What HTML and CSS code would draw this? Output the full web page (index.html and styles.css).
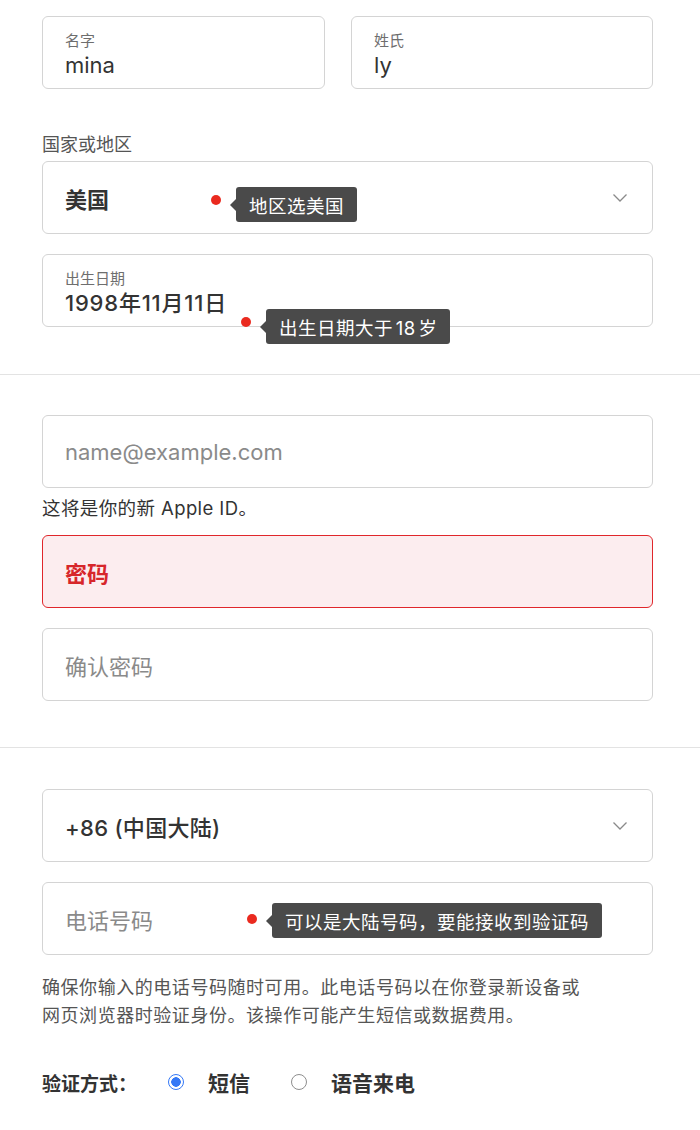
FILE: index.html
```html
<!DOCTYPE html>
<html lang="zh-CN">
<head>
<meta charset="utf-8">
<title>创建 Apple ID</title>
<link rel="stylesheet" href="styles.css">
</head>
<body>
<main class="form">
  <section class="section section-first">
    <div class="name-row">
      <div class="field field-labeled">
        <span class="field-label">名字</span>
        <span class="field-value">mina</span>
      </div>
      <div class="field field-labeled">
        <span class="field-label">姓氏</span>
        <span class="field-value">ly</span>
      </div>
    </div>

    <div class="group-label">国家或地区</div>
    <div class="field field-select">
      <span class="select-value">美国</span>
      <svg class="chevron" viewBox="0 0 16 10" aria-hidden="true"><path d="M1.5 1.5 L8 8 L14.5 1.5"/></svg>
      <span class="dot dot-country"></span>
      <span class="tip tip-country">地区选美国</span>
    </div>

    <div class="field field-labeled field-dob">
      <span class="field-label">出生日期</span>
      <span class="field-value dob-value">1998年11月11日</span>
      <span class="dot dot-dob"></span>
      <span class="tip tip-dob">出生日期大于 18 岁</span>
    </div>
  </section>

  <section class="section section-account">
    <div class="field field-plain">
      <span class="placeholder">name@example.com</span>
    </div>
    <p class="helper">这将是你的新 Apple ID。</p>
    <div class="field field-plain field-error">
      <span class="error-text">密码</span>
    </div>
    <div class="field field-plain field-gap">
      <span class="placeholder">确认密码</span>
    </div>
  </section>

  <section class="section section-phone">
    <div class="field field-select">
      <span class="select-value phone-code">+86 (中国大陆)</span>
      <svg class="chevron" viewBox="0 0 16 10" aria-hidden="true"><path d="M1.5 1.5 L8 8 L14.5 1.5"/></svg>
    </div>
    <div class="field field-plain field-gap">
      <span class="placeholder">电话号码</span>
      <span class="dot dot-phone"></span>
      <span class="tip tip-phone">可以是大陆号码，要能接收到验证码</span>
    </div>
    <p class="notice">确保你输入的电话号码随时可用。此电话号码以在你登录新设备或<br>网页浏览器时验证身份。该操作可能产生短信或数据费用。</p>
    <div class="verify-row">
      <span class="verify-label">验证方式：</span>
      <span class="radio radio-on"></span>
      <span class="radio-text">短信</span>
      <span class="radio radio-off"></span>
      <span class="radio-text">语音来电</span>
    </div>
  </section>
</main>
</body>
</html>
```

FILE: styles.css
```css
* { box-sizing: border-box; }

html, body {
  margin: 0;
  padding: 0;
  background: #ffffff;
}

body {
  width: 700px;
  height: 1130px;
  overflow: hidden;
  font-family: "Inter", "Noto Sans CJK SC", sans-serif;
  color: #333333;
}

.form {
  display: flex;
  flex-direction: column;
}

.section {
  padding: 0 47px 0 42px;
  display: flex;
  flex-direction: column;
}

.section-first {
  padding-top: 16px;
  padding-bottom: 47px;
  border-bottom: 1px solid #e3e3e3;
}

.section-account {
  padding-top: 40px;
  padding-bottom: 46px;
  border-bottom: 1px solid #e3e3e3;
}

.section-phone {
  padding-top: 41px;
}

.name-row {
  display: grid;
  grid-template-columns: 283px 1fr;
  gap: 26px;
}

.field {
  position: relative;
  height: 73px;
  border: 1px solid #d4d4d4;
  border-radius: 6px;
  background: #ffffff;
  padding: 0 24px 0 22px;
}

.field-labeled {
  display: flex;
  flex-direction: column;
  padding-top: 14px;
}

.field-label {
  font-size: 15px;
  line-height: 20px;
  color: #6e6e6e;
}

.field-value {
  font-size: 22px;
  line-height: 28px;
  color: #333333;
}

.dob-value {
  font-weight: 500;
  letter-spacing: 0.8px;
}

.field-dob {
  margin-top: 20px;
}

.group-label {
  margin-top: 44px;
  margin-bottom: 4px;
  font-size: 18px;
  line-height: 24px;
  color: #555555;
}

.field-select {
  display: flex;
  align-items: center;
  justify-content: space-between;
}

.select-value {
  font-size: 22px;
  font-weight: 600;
  color: #333333;
}

.phone-code {
  font-weight: 500;
  letter-spacing: 0.3px;
}

.chevron {
  width: 16px;
  height: 10px;
  fill: none;
  stroke: #8a8a8a;
  stroke-width: 1.3;
}

.field-plain {
  display: flex;
  align-items: center;
}

.field-gap {
  margin-top: 20px;
}

.placeholder {
  font-size: 22px;
  color: #8a8a8a;
}

.helper {
  margin: 8px 0 15px;
  font-size: 18.5px;
  line-height: 24px;
  letter-spacing: 0.4px;
  color: #333333;
}

.field-error {
  border-color: #e0272b;
  background: #fcedef;
}

.error-text {
  font-size: 22px;
  font-weight: 600;
  color: #d7262a;
}

.notice {
  margin: 19px 0 0;
  font-size: 18px;
  line-height: 28px;
  letter-spacing: 0.55px;
  color: #555555;
}

.verify-row {
  margin-top: 37px;
  display: flex;
  align-items: center;
  height: 30px;
}

.verify-label {
  font-size: 19px;
  font-weight: 700;
  color: #333333;
  margin-right: 31px;
}

.radio {
  width: 16px;
  height: 16px;
  border-radius: 50%;
  flex: none;
}

.radio-on {
  border: 1.5px solid #3478f6;
  background: radial-gradient(circle, #3478f6 0 4.5px, #ffffff 5px);
}

.radio-off {
  border: 1.5px solid #8e8e8e;
  background: #ffffff;
}

.radio-text {
  font-size: 21px;
  font-weight: 700;
  color: #333333;
  margin-left: 24px;
  margin-right: 41px;
}

/* annotation overlays */
.dot {
  position: absolute;
  width: 10px;
  height: 10px;
  border-radius: 50%;
  background: #ea2a1f;
}

.tip {
  position: absolute;
  height: 35px;
  padding: 0 13px;
  display: flex;
  align-items: center;
  background: #4a4a4a;
  border-radius: 3px;
  color: #ffffff;
  font-size: 18.5px;
  white-space: nowrap;
  letter-spacing: 0.5px;
}

.tip::before {
  content: "";
  position: absolute;
  left: -6px;
  top: 50%;
  margin-top: -6px;
  border-style: solid;
  border-width: 6px 6px 6px 0;
  border-color: transparent #4a4a4a transparent transparent;
}

.tip-dob {
  word-spacing: -3px;
}

.dot-country { left: 168px; top: 33px; }
.tip-country { left: 193px; top: 25px; }

.dot-dob { left: 198px; top: 62px; }
.tip-dob { left: 223px; top: 54px; }

.dot-phone { left: 204px; top: 31px; }
.tip-phone { left: 229px; top: 20px; }
```
